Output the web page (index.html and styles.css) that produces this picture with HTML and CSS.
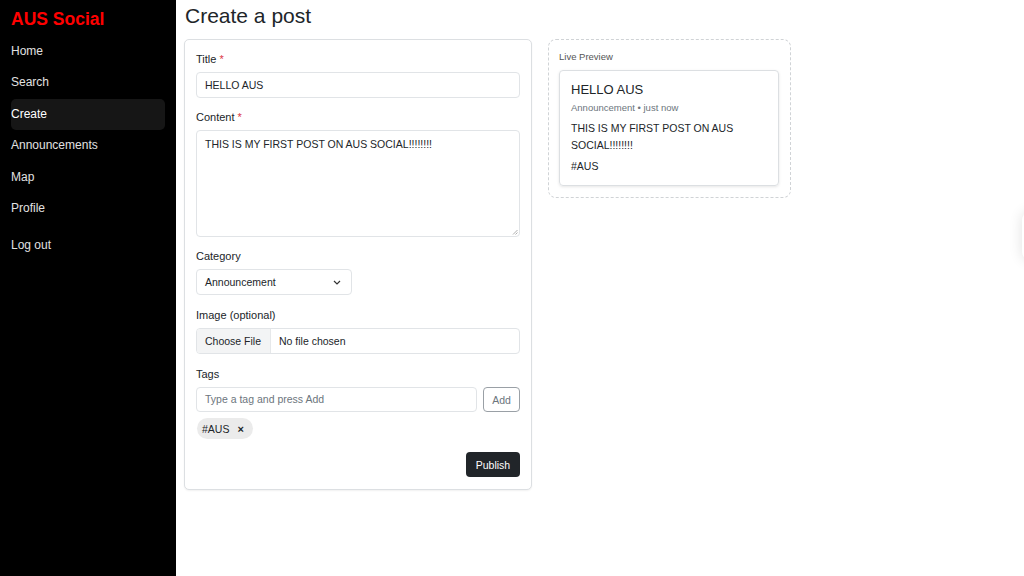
FILE: index.html
```html
<!DOCTYPE html>
<html lang="en">
<head>
<meta charset="utf-8">
<title>Create a post - AUS Social</title>
<link rel="stylesheet" href="styles.css">
</head>
<body>
<div class="app">
  <aside class="sidebar">
    <div class="brand">AUS Social</div>
    <nav class="nav">
      <a class="nav-item">Home</a>
      <a class="nav-item">Search</a>
      <a class="nav-item active">Create</a>
      <a class="nav-item">Announcements</a>
      <a class="nav-item">Map</a>
      <a class="nav-item">Profile</a>
      <a class="nav-item logout">Log out</a>
    </nav>
  </aside>
  <main class="main">
    <h1 class="page-title">Create a post</h1>
    <div class="columns">
      <form class="card form-card">
        <div class="field">
          <label class="label">Title <span class="req">*</span></label>
          <div class="input">HELLO AUS</div>
        </div>
        <div class="field">
          <label class="label">Content <span class="req">*</span></label>
          <div class="textarea">THIS IS MY FIRST POST ON AUS SOCIAL!!!!!!!!
            <svg class="grip" width="6" height="6" viewBox="0 0 6 6"><path d="M5.5 1 L1 5.5 M5.5 3.5 L3.5 5.5" stroke="#999" stroke-width="0.8"/></svg>
          </div>
        </div>
        <div class="field field-wide">
          <label class="label">Category</label>
          <div class="input select">Announcement
            <svg class="chev" width="8" height="5" viewBox="0 0 8 5"><path d="M1 1 L4 4 L7 1" fill="none" stroke="#333" stroke-width="1.2"/></svg>
          </div>
        </div>
        <div class="field field-wide">
          <label class="label">Image (optional)</label>
          <div class="input file"><span class="file-btn">Choose File</span><span class="file-name">No file chosen</span></div>
        </div>
        <div class="field tags-field">
          <label class="label">Tags</label>
          <div class="tag-row">
            <div class="input tag-input placeholder">Type a tag and press Add</div>
            <button type="button" class="btn-outline">Add</button>
          </div>
          <div class="chips"><span class="chip">#AUS <span class="chip-x">×</span></span></div>
        </div>
        <div class="actions"><button type="button" class="btn-dark">Publish</button></div>
      </form>
      <section class="preview">
        <div class="preview-label">Live Preview</div>
        <article class="preview-card">
          <h2 class="post-title">HELLO AUS</h2>
          <div class="post-meta">Announcement • just now</div>
          <p class="post-body">THIS IS MY FIRST POST ON AUS SOCIAL!!!!!!!!</p>
          <div class="post-tags">#AUS</div>
        </article>
      </section>
    </div>
  </main>
</div>
<div class="edge-widget"></div>
</body>
</html>
```
FILE: styles.css
```css
* { box-sizing: border-box; }
html, body { margin: 0; padding: 0; }
body {
  font-family: "Liberation Sans", Arial, sans-serif;
  color: #212529;
  background: #fff;
  width: 1024px;
  height: 576px;
  overflow: hidden;
}
.app { display: flex; height: 576px; }
.sidebar {
  width: 176px;
  flex: none;
  background: #000;
  padding: 7px 11px 0 11px;
}
.brand {
  color: #ff0000;
  font-size: 17.5px;
  font-weight: bold;
  line-height: 24px;
  margin-bottom: 4.5px;
}
.nav { display: flex; flex-direction: column; }
.nav-item {
  display: block;
  color: #e2e2e2;
  font-size: 12px;
  line-height: 15.5px;
  padding: 8px 0;
  border-radius: 5px;
}
.nav-item.active { background: #161616; color: #fff; }
.nav-item.logout { margin-top: 5px; }

.main { flex: 1; padding: 3px 0 0 8px; }
.page-title {
  margin: 0 0 11px 1px;
  font-size: 21px;
  font-weight: normal;
  line-height: 25px;
  color: #212529;
}
.columns { display: flex; align-items: flex-start; gap: 16px; }
.card {
  border: 1px solid #dcdfe2;
  border-radius: 5px;
  background: #fff;
  box-shadow: 0 1px 2px rgba(0,0,0,0.06);
}
.form-card { width: 348px; padding: 12px 11px 12px 11px; }
.field { margin-bottom: 12px; }
.field-wide { margin-bottom: 13px; }
.label {
  display: block;
  font-size: 11px;
  line-height: 14px;
  margin-bottom: 6px;
  color: #212529;
}
.req { color: #dc3545; }
.input {
  height: 26px;
  border: 1px solid #e1e4e7;
  border-radius: 4px;
  padding: 0 8px;
  font-size: 10.5px;
  line-height: 24px;
  color: #212529;
  background: #fff;
}
.textarea {
  position: relative;
  height: 107px;
  border: 1px solid #e1e4e7;
  border-radius: 4px;
  padding: 6px 8px;
  font-size: 10.5px;
  line-height: 14px;
}
.grip { position: absolute; right: 1px; bottom: 1px; }
.select {
  width: 156px;
  display: flex;
  align-items: center;
  justify-content: space-between;
  padding-right: 10px;
}
.file { display: flex; padding: 0; overflow: hidden; }
.file-btn {
  background: #f3f4f5;
  padding: 0 8px;
  width: 74px;
  border-right: 1px solid #e6e8ea;
}
.file-name { padding-left: 8px; }
.tags-field { margin-bottom: 13px; }
.tag-row { display: flex; gap: 6px; }
.tag-input { flex: 1; height: 25px; line-height: 23px; }
.placeholder { color: #6c757d; }
.btn-outline {
  width: 37px;
  height: 25px;
  border: 1px solid #9aa0a6;
  border-radius: 4px;
  background: #fff;
  color: #6c757d;
  font-family: inherit;
  font-size: 10.5px;
  padding: 0;
}
.chips { margin-top: 6px; display: flex; }
.chip {
  display: inline-flex;
  align-items: center;
  height: 21px;
  padding: 0 9px 0 5px;
  margin-left: 1px;
  background: #ebebeb;
  border-radius: 11px;
  font-size: 10.5px;
  color: #212529;
}
.chip-x { margin-left: 8px; font-size: 11px; font-weight: bold; }
.actions { display: flex; justify-content: flex-end; }
.btn-dark {
  width: 54px;
  height: 25px;
  border: none;
  border-radius: 4px;
  background: #212529;
  color: #fff;
  font-family: inherit;
  font-size: 10.5px;
  padding: 0;
}

.preview {
  width: 243px;
  border: 1px dashed #d0d3d6;
  border-radius: 8px;
  padding: 11px 11px 11px 10px;
}
.preview-label {
  font-size: 9.5px;
  line-height: 12px;
  color: #555;
  margin-bottom: 7px;
}
.preview-card {
  border: 1px solid #dcdfe2;
  border-radius: 4px;
  box-shadow: 0 1px 3px rgba(0,0,0,0.1);
  padding: 11px 11px 10px 11px;
}
.post-title {
  margin: 0;
  font-size: 13px;
  font-weight: normal;
  line-height: 16px;
  color: #212529;
}
.post-meta {
  margin-top: 2.5px;
  font-size: 9.5px;
  line-height: 13px;
  color: #6c757d;
}
.post-body {
  margin: 6px 0 0 0;
  font-size: 10.5px;
  line-height: 17px;
}
.post-tags {
  margin-top: 4px;
  font-size: 10.5px;
  line-height: 17px;
}
.edge-widget {
  position: fixed;
  left: 1022px;
  top: 212px;
  width: 40px;
  height: 48px;
  background: #fff;
  border-radius: 8px;
  box-shadow: 0 0 14px rgba(0,0,0,0.12);
}
```
